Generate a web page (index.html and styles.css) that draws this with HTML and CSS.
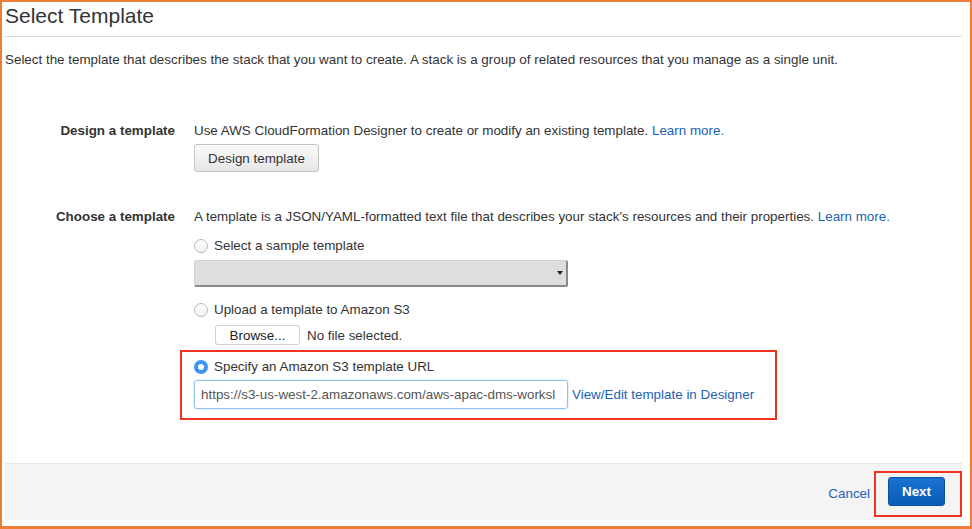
FILE: index.html
```html
<!DOCTYPE html>
<html>
<head>
<meta charset="utf-8">
<link rel="stylesheet" href="styles.css">
</head>
<body>
<div class="frame">
  <div class="page">
    <h1 class="title">Select Template</h1>
    <p class="intro">Select the template that describes the stack that you want to create. A stack is a group of related resources that you manage as a single unit.</p>

    <div class="row row-design">
      <div class="label">Design a template</div>
      <div class="content">
        <div class="line">Use AWS CloudFormation Designer to create or modify an existing template. <a class="link">Learn more.</a></div>
        <button class="btn">Design template</button>
      </div>
    </div>

    <div class="row row-choose">
      <div class="label">Choose a template</div>
      <div class="content">
        <div class="line">A template is a JSON/YAML-formatted text file that describes your stack's resources and their properties. <a class="link">Learn more.</a></div>
        <label class="radio-line"><span class="radio"></span>Select a sample template</label>
        <div class="select"><span class="select-arrow"></span></div>
        <label class="radio-line radio-upload"><span class="radio"></span>Upload a template to Amazon S3</label>
        <div class="file-line"><button class="btn-small">Browse...</button><span>No file selected.</span></div>
        <div class="highlight">
          <label class="radio-line"><span class="radio checked"></span>Specify an Amazon S3 template URL</label>
          <div class="url-line">
            <div class="url-input">https://s3-us-west-2.amazonaws.com/aws-apac-dms-worksl</div>
            <a class="link">View/Edit template in Designer</a>
          </div>
        </div>
      </div>
    </div>

    <div class="footer">
      <a class="link cancel">Cancel</a>
      <div class="next-box"><button class="btn-primary">Next</button></div>
    </div>
  </div>
</div>
</body>
</html>
```

FILE: styles.css
```css
* { box-sizing: border-box; }
html, body { margin: 0; padding: 0; background: #fff; }
body {
  font-family: "Liberation Sans", Arial, sans-serif;
  font-size: 13.4px;
  color: #333;
  width: 972px;
  height: 529px;
  overflow: hidden;
}
.frame {
  width: 972px;
  height: 529px;
  border: 2px solid #eb7d34;
  border-bottom-width: 3px;
  padding: 0 8px 6px 3px;
}
.page {
  height: 100%;
  display: flex;
  flex-direction: column;
}
.title {
  margin: 0;
  font-weight: normal;
  font-size: 21px;
  color: #333;
  padding: 2px 0 0 0;
  height: 35px;
  border-bottom: 1px solid #dadada;
  line-height: 24px;
}
.intro {
  margin: 15px 0 0 0;
  line-height: 16px;
  color: #333;
}
.row {
  display: flex;
  gap: 19px;
}
.row-design { margin-top: 55px; }
.row-choose { margin-top: 37px; }
.label {
  width: 170px;
  text-align: right;
  font-weight: bold;
  line-height: 16px;
  flex: none;
}
.content {
  display: flex;
  flex-direction: column;
  align-items: flex-start;
}
.line { line-height: 16px; }
.link { color: #1b62b4; text-decoration: none; }
.btn {
  margin-top: 5px;
  height: 28px;
  width: 125px;
  font: inherit;
  color: #333;
  border: 1px solid #c4c4c4;
  border-radius: 3px;
  background: linear-gradient(#fafafa, #e6e6e6);
  padding: 0;
}
.radio-line {
  display: flex;
  align-items: center;
  gap: 6px;
  line-height: 16px;
  margin-top: 13px;
}
.radio {
  width: 14px;
  height: 14px;
  border-radius: 50%;
  border: 1px solid #b9b9b9;
  background: linear-gradient(#fff, #f2f2f2);
  flex: none;
  position: relative;
}
.radio.checked {
  border: none;
  background: #3d93f1;
}
.radio.checked::after {
  content: "";
  position: absolute;
  left: 4px;
  top: 4px;
  width: 6px;
  height: 6px;
  border-radius: 50%;
  background: #fff;
}
.select {
  margin-top: 6px;
  width: 374px;
  height: 27px;
  background: #dedede;
  border: 1px solid #d2d2d2;
  border-right: 2px solid #8a8a8a;
  border-bottom: 2px solid #8a8a8a;
  border-radius: 2px;
  position: relative;
}
.select-arrow {
  position: absolute;
  right: 3px;
  top: 10px;
  width: 0;
  height: 0;
  border-left: 3px solid transparent;
  border-right: 3px solid transparent;
  border-top: 4px solid #222;
}
.radio-upload { margin-top: 15px; }
.file-line {
  display: flex;
  align-items: center;
  gap: 7px;
  margin-top: 7px;
  margin-left: 21px;
}
.btn-small {
  width: 85px;
  height: 20px;
  font: inherit;
  color: #222;
  border: 1px solid #d0d0d0;
  border-radius: 3px;
  background: #fff;
  padding: 0;
}
.highlight {
  margin-top: 5px;
  margin-left: -14px;
  width: 597px;
  height: 70px;
  border: 2px solid #f0321e;
  padding: 0 0 0 12px;
}
.highlight .radio-line { margin-top: 7px; }
.url-line {
  display: flex;
  align-items: center;
  gap: 4px;
  margin-top: 5px;
}
.url-input {
  width: 374px;
  height: 29px;
  border: 1px solid #8fc0ef;
  border-radius: 3px;
  box-shadow: 0 0 2px #a9d2f7;
  padding: 6px 0 0 6px;
  color: #555;
  white-space: nowrap;
  overflow: hidden;
  line-height: 15px;
}
.footer {
  margin-top: auto;
  height: 57px;
  background: #f4f4f4;
  border-top: 1px solid #e6e6e6;
  display: flex;
  align-items: center;
  justify-content: flex-end;
  padding-top: 3px;
}
.cancel {
  margin-right: 4px;
}
.next-box {
  width: 88px;
  height: 46px;
  border: 2px solid #f0321e;
  display: flex;
  align-items: flex-start;
  justify-content: flex-start;
  padding: 4px 0 0 12px;
}
.btn-primary {
  width: 57px;
  height: 29px;
  font: inherit;
  font-weight: bold;
  color: #fff;
  border: 1px solid #0b4fa1;
  border-radius: 3px;
  background: linear-gradient(#1a72d0, #0a5cb8);
  padding: 0;
}
```
